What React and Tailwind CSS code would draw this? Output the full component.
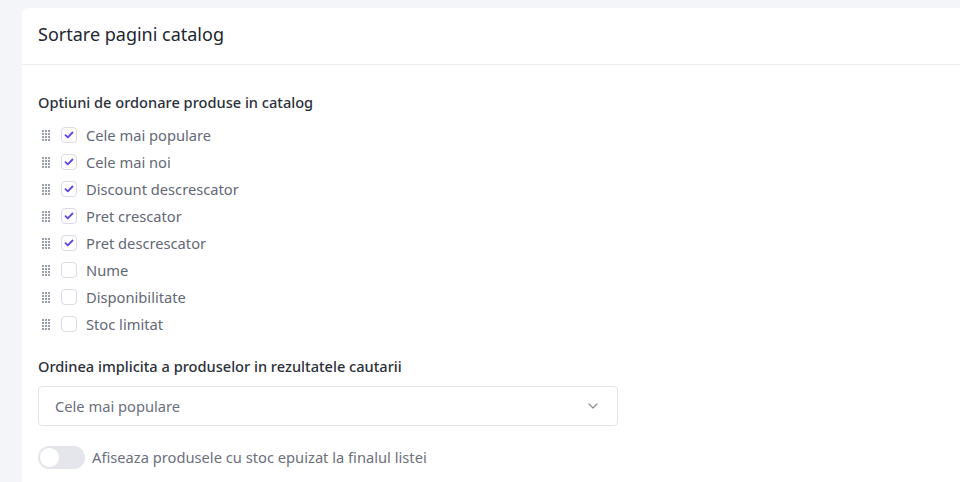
import React, { useState } from 'react'

const optiuni = [
  { id: 'popular', label: 'Cele mai populare', checked: true },
  { id: 'noi', label: 'Cele mai noi', checked: true },
  { id: 'discount', label: 'Discount descrescator', checked: true },
  { id: 'pretAsc', label: 'Pret crescator', checked: true },
  { id: 'pretDesc', label: 'Pret descrescator', checked: true },
  { id: 'nume', label: 'Nume', checked: false },
  { id: 'disp', label: 'Disponibilitate', checked: false },
  { id: 'stoc', label: 'Stoc limitat', checked: false }
]

const DragHandle = () => (
  <svg width="9" height="11" viewBox="0 0 9 11" className="shrink-0">
    {[0, 1, 2, 3].map(r => [0, 1, 2].map(c => (
      <rect key={`${r}-${c}`} x={c * 3} y={r * 3} width="2" height="2" fill="#9aa0ab" />
    )))}
  </svg>
)

export default function App() {
  const [items, setItems] = useState(optiuni)
  const [stocFinal, setStocFinal] = useState(false)

  const toggle = (id) => setItems(items.map(i => i.id === id ? { ...i, checked: !i.checked } : i))

  return (
    <div className="min-h-[482px] bg-[#f4f5f9] pl-[22px] pt-2 overflow-hidden" style={{ fontFamily: '"Noto Sans", sans-serif' }}>
      <div className="bg-white rounded-tl-md min-h-[474px]">
        {/* header */}
        <div className="pl-4 h-[57px] flex items-center border-b border-[#eceef2] pb-[4px]">
          <h2 className="text-[18px] text-[#222631]">Sortare pagini catalog</h2>
        </div>

        <div className="pl-4 pt-[27px]">
          <div className="text-[14.6px] text-[#2b2f3a] font-medium mb-[8px]">Optiuni de ordonare produse in catalog</div>

          {/* lista sortare */}
          <div className="flex flex-col">
            {items.map(i => (
              <div key={i.id} className="h-[27px] flex items-center">
                <div className="w-[23px] pl-[4px] flex items-center"><DragHandle /></div>
                <button
                  onClick={() => toggle(i.id)}
                  className="w-4 h-4 rounded-[4px] border border-[#d9dce3] bg-white flex items-center justify-center"
                >
                  {i.checked && (
                    <svg width="10" height="8" viewBox="0 0 10 8">
                      <path d="M1.5 4.2 L3.8 6.3 L8.5 1.5" stroke="#5b45e8" strokeWidth="1.8" fill="none" strokeLinecap="round" strokeLinejoin="round" />
                    </svg>
                  )}
                </button>
                <span className="ml-[9px] text-[14.7px] text-[#636875]">{i.label}</span>
              </div>
            ))}
          </div>

          <div className="mt-[18px] text-[14.6px] text-[#2b2f3a] font-medium">Ordinea implicita a produselor in rezultatele cautarii</div>

          {/* select */}
          <div className="mt-[8px] w-[580px] h-10 border border-[#e2e4ea] rounded-[4px] flex items-center justify-between pl-4 pr-[19px]">
            <span className="text-[14.7px] text-[#6b707c]">Cele mai populare</span>
            <svg width="10" height="6" viewBox="0 0 10 6">
              <path d="M1 1 L5 5 L9 1" stroke="#8a8f99" strokeWidth="1.2" fill="none" strokeLinecap="round" strokeLinejoin="round" />
            </svg>
          </div>

          {/* switch */}
          <div className="mt-[20px] flex items-center gap-[7px]">
            <button
              onClick={() => setStocFinal(!stocFinal)}
              className={`w-[47px] h-[23px] rounded-full flex items-center px-[2px] ${stocFinal ? 'bg-[#5b45e8] justify-end' : 'bg-[#e4e6eb] justify-start'}`}
            >
              <span className="w-[19px] h-[19px] rounded-full bg-white block" />
            </button>
            <span className="text-[14.7px] text-[#6b707c]">Afiseaza produsele cu stoc epuizat la finalul listei</span>
          </div>
        </div>
      </div>
    </div>
  )
}
